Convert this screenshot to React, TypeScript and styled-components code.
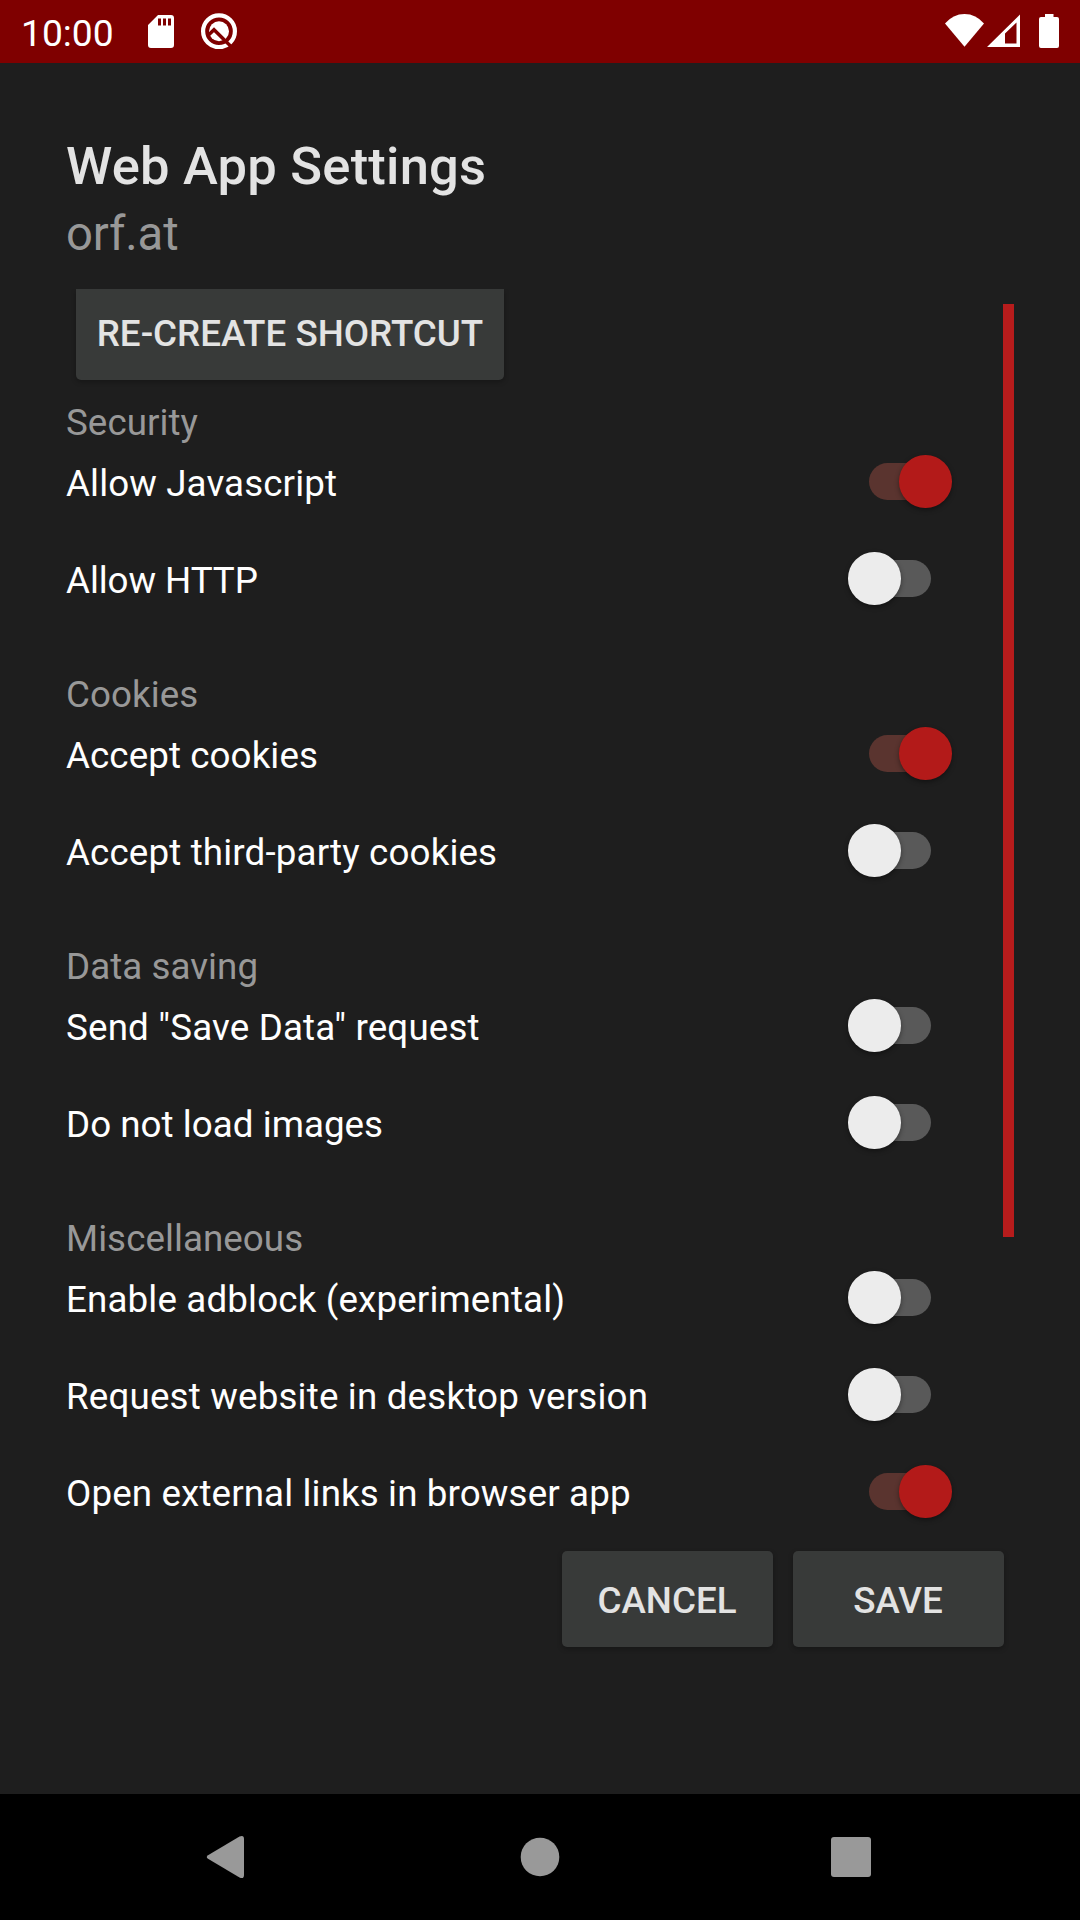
import React, { useState } from "react";
import styled, { createGlobalStyle } from "styled-components";

const GlobalStyle = createGlobalStyle`
  *, *::before, *::after { box-sizing: border-box; }
  body { margin: 0; background: #1e1e1e; }
`;

const Screen = styled.div`
  width: 1080px;
  height: 1920px;
  display: flex;
  flex-direction: column;
  overflow: hidden;
  background: #1e1e1e;
  color: #fff;
  font-family: Roboto, "Noto Sans", sans-serif;
  font-size: 36.75px;
`;

const StatusBar = styled.header`
  height: 63px;
  flex: none;
  display: flex;
  align-items: flex-start;
  background: #7f0000;
  padding: 0 21px;
`;

const Clock = styled.span`
  width: 127px;
  line-height: 67px;
  font-size: 37.2px;
`;

const StatusIcon = styled.svg<{ $w: number; $gap?: number }>`
  flex: none;
  width: ${(p) => p.$w}px;
  height: 36px;
  margin-top: 13px;
  margin-left: ${(p) => p.$gap ?? 0}px;
`;

const Spacer = styled.div`
  flex: 1;
`;

const Main = styled.main`
  flex: 1;
  min-height: 0;
  display: flex;
  flex-direction: column;
  padding: 72px 66px 0;
`;

const Title = styled.h1`
  margin: 0;
  font-size: 52.5px;
  font-weight: 500;
  line-height: 62px;
  letter-spacing: 0.22px;
  color: #e3e3e3;
`;

const Subtitle = styled.p`
  margin: 6px 0 0;
  height: 86px;
  font-size: 47.25px;
  line-height: 62px;
  letter-spacing: -0.15px;
  color: #989898;
`;

const ScrollArea = styled.div`
  height: 1251px;
  margin-left: -10px;
  padding-left: 10px;
  flex: none;
  display: flex;
  overflow: hidden;
`;

const Content = styled.div`
  flex: 1;
  padding-right: 51px;
`;

const ScrollThumb = styled.div`
  width: 11px;
  height: 933px;
  margin-top: 15px;
  background: #b71c1c;
`;

const Button = styled.button<{ $clipped?: boolean }>`
  display: flex;
  align-items: center;
  justify-content: center;
  width: ${(p) => (p.$clipped ? 428 : 211)}px;
  height: ${(p) => (p.$clipped ? 91 : 96)}px;
  margin: ${(p) => (p.$clipped ? "0 0 21px 10px" : "0")};
  padding: ${(p) => (p.$clipped ? "0 0 2px" : "3px 1px 0 0")};
  border: 0;
  border-radius: ${(p) => (p.$clipped ? "0 0 5px 5px" : "5px")};
  background: #383a39;
  color: #e3e3e3;
  font: 500 36.75px/44px Roboto, "Noto Sans", sans-serif;
  white-space: nowrap;
  box-shadow: 0 2px 5px rgba(0, 0, 0, 0.28);
`;

const Section = styled.section`
  display: flex;
  flex-direction: column;
  margin-bottom: 58px;
`;

const SectionTitle = styled.h2`
  margin: 0;
  font-size: inherit;
  font-weight: 400;
  line-height: 43px;
  letter-spacing: 0.05px;
  color: #989898;
`;

const Rows = styled.div`
  display: flex;
  flex-direction: column;
  gap: 23px;
`;

const Row = styled.label`
  height: 74px;
  display: flex;
  align-items: center;
  justify-content: space-between;
`;

const RowLabel = styled.span<{ $tracking: number }>`
  padding-top: 5px;
  line-height: 44px;
  letter-spacing: ${(p) => p.$tracking}px;
`;

const Switch = styled.button<{ $on: boolean }>`
  width: 104px;
  height: 53px;
  margin: 1px 0 0;
  padding: 0;
  border: 0;
  background: none;
  display: grid;
  align-items: center;
  justify-items: ${(p) => (p.$on ? "end" : "start")};

  &::before,
  &::after {
    content: "";
    grid-area: 1 / 1;
  }
  &::before {
    justify-self: center;
    width: 62px;
    height: 37px;
    border-radius: 19px;
    background: ${(p) => (p.$on ? "#5a342f" : "#595959")};
  }
  &::after {
    width: 52.5px;
    height: 52.5px;
    margin-right: ${(p) => (p.$on ? 0.5 : 0)}px;
    border-radius: 50%;
    background: ${(p) => (p.$on ? "#b31a19" : "#ececec")};
    box-shadow: 0 2px 5px rgba(0, 0, 0, 0.4);
  }
`;

const Actions = styled.div`
  display: flex;
  justify-content: flex-end;
  gap: 20px;
  padding: 11px 10px 0 0;
`;

const NavBar = styled.nav`
  height: 126px;
  flex: none;
  display: flex;
  justify-content: space-between;
  align-items: center;
  padding: 0 205px;
  background: #000;
`;

const NavIcon = styled.svg`
  width: 48px;
  height: 48px;
  fill: #999;
`;

type Setting = { label: string; on: boolean; tracking: number };

const SECTIONS: { title: string; settings: Setting[] }[] = [
  {
    title: "Security",
    settings: [
      { label: "Allow Javascript", on: true, tracking: 0.11 },
      { label: "Allow HTTP", on: false, tracking: -0.08 },
    ],
  },
  {
    title: "Cookies",
    settings: [
      { label: "Accept cookies", on: true, tracking: 0.08 },
      { label: "Accept third-party cookies", on: false, tracking: 0.14 },
    ],
  },
  {
    title: "Data saving",
    settings: [
      { label: 'Send "Save Data" request', on: false, tracking: 0.16 },
      { label: "Do not load images", on: false, tracking: 0.03 },
    ],
  },
  {
    title: "Miscellaneous",
    settings: [
      { label: "Enable adblock (experimental)", on: false, tracking: 0.14 },
      { label: "Request website in desktop version", on: false, tracking: 0.17 },
      { label: "Open external links in browser app", on: true, tracking: 0.12 },
    ],
  },
];

function SettingRow({ label, on, tracking }: Setting) {
  const [checked, setChecked] = useState(on);
  return (
    <Row>
      <RowLabel $tracking={tracking}>{label}</RowLabel>
      <Switch
        type="button"
        role="switch"
        aria-checked={checked}
        $on={checked}
        onClick={() => setChecked(!checked)}
      />
    </Row>
  );
}

export default function App() {
  return (
    <Screen>
      <GlobalStyle />
      <StatusBar>
        <Clock>10:00</Clock>
        <StatusIcon $w={26} viewBox="0 0 26 36">
          <path
            fill="#fff"
            fillRule="evenodd"
            d="M10 2H23Q26 2 26 5V32Q26 35 23 35H3Q0 35 0 32V12ZM10 5.500V12.500H13V5.500ZM15 5.500V12.500H18V5.500ZM20 5.500V12.500H23V5.500Z"
          />
        </StatusIcon>
        <StatusIcon $w={36} $gap={27} viewBox="0 0 36 36">
          <circle cx="18" cy="18.300" r="15.900" fill="none" stroke="#fff" strokeWidth="4.200" />
          <circle cx="18" cy="18.300" r="10" fill="#fff" />
          <path d="M7 22.500 13 16.700 29.500 33" fill="none" stroke="#7f0000" strokeWidth="3.400" />
        </StatusIcon>
        <Spacer />
        <StatusIcon $w={39} viewBox="0 0 39 36">
          <path fill="#fff" d="M0 10.500Q8 1 19.500 1T39 10.500L19.500 33.700Z" />
        </StatusIcon>
        <StatusIcon $w={33} $gap={3} viewBox="0 0 33 36">
          <path fill="#fff" fillRule="evenodd" d="M0 34 33 1.500V34ZM18 20.500V30.500H29.500V9.500Z" />
        </StatusIcon>
        <StatusIcon $w={20} $gap={19} viewBox="0 0 20 36">
          <path
            fill="#fff"
            d="M6 1H14.500V4H18Q20 4 20 6V33Q20 35 18 35H2Q0 35 0 33V6Q0 4 2 4H6Z"
          />
        </StatusIcon>
      </StatusBar>
      <Main>
        <Title>Web App Settings</Title>
        <Subtitle>orf.at</Subtitle>
        <ScrollArea>
          <Content>
            <Button $clipped>RE-CREATE SHORTCUT</Button>
            {SECTIONS.map((section) => (
              <Section key={section.title}>
                <SectionTitle>{section.title}</SectionTitle>
                <Rows>
                  {section.settings.map((s) => (
                    <SettingRow key={s.label} {...s} />
                  ))}
                </Rows>
              </Section>
            ))}
          </Content>
          <ScrollThumb />
        </ScrollArea>
        <Actions>
          <Button>CANCEL</Button>
          <Button>SAVE</Button>
        </Actions>
      </Main>
      <NavBar>
        <NavIcon viewBox="0 0 48 48">
          <path d="M3 22.200 34.500 3.500Q39 1.500 39 6V42Q39 46.500 34.500 44.500L3 25.800Q0.500 24 3 22.200Z" />
        </NavIcon>
        <NavIcon viewBox="0 0 48 48">
          <circle cx="24" cy="24" r="19.300" />
        </NavIcon>
        <NavIcon viewBox="0 0 48 48">
          <rect x="4" y="4" width="40" height="40" rx="3" />
        </NavIcon>
      </NavBar>
    </Screen>
  );
}
